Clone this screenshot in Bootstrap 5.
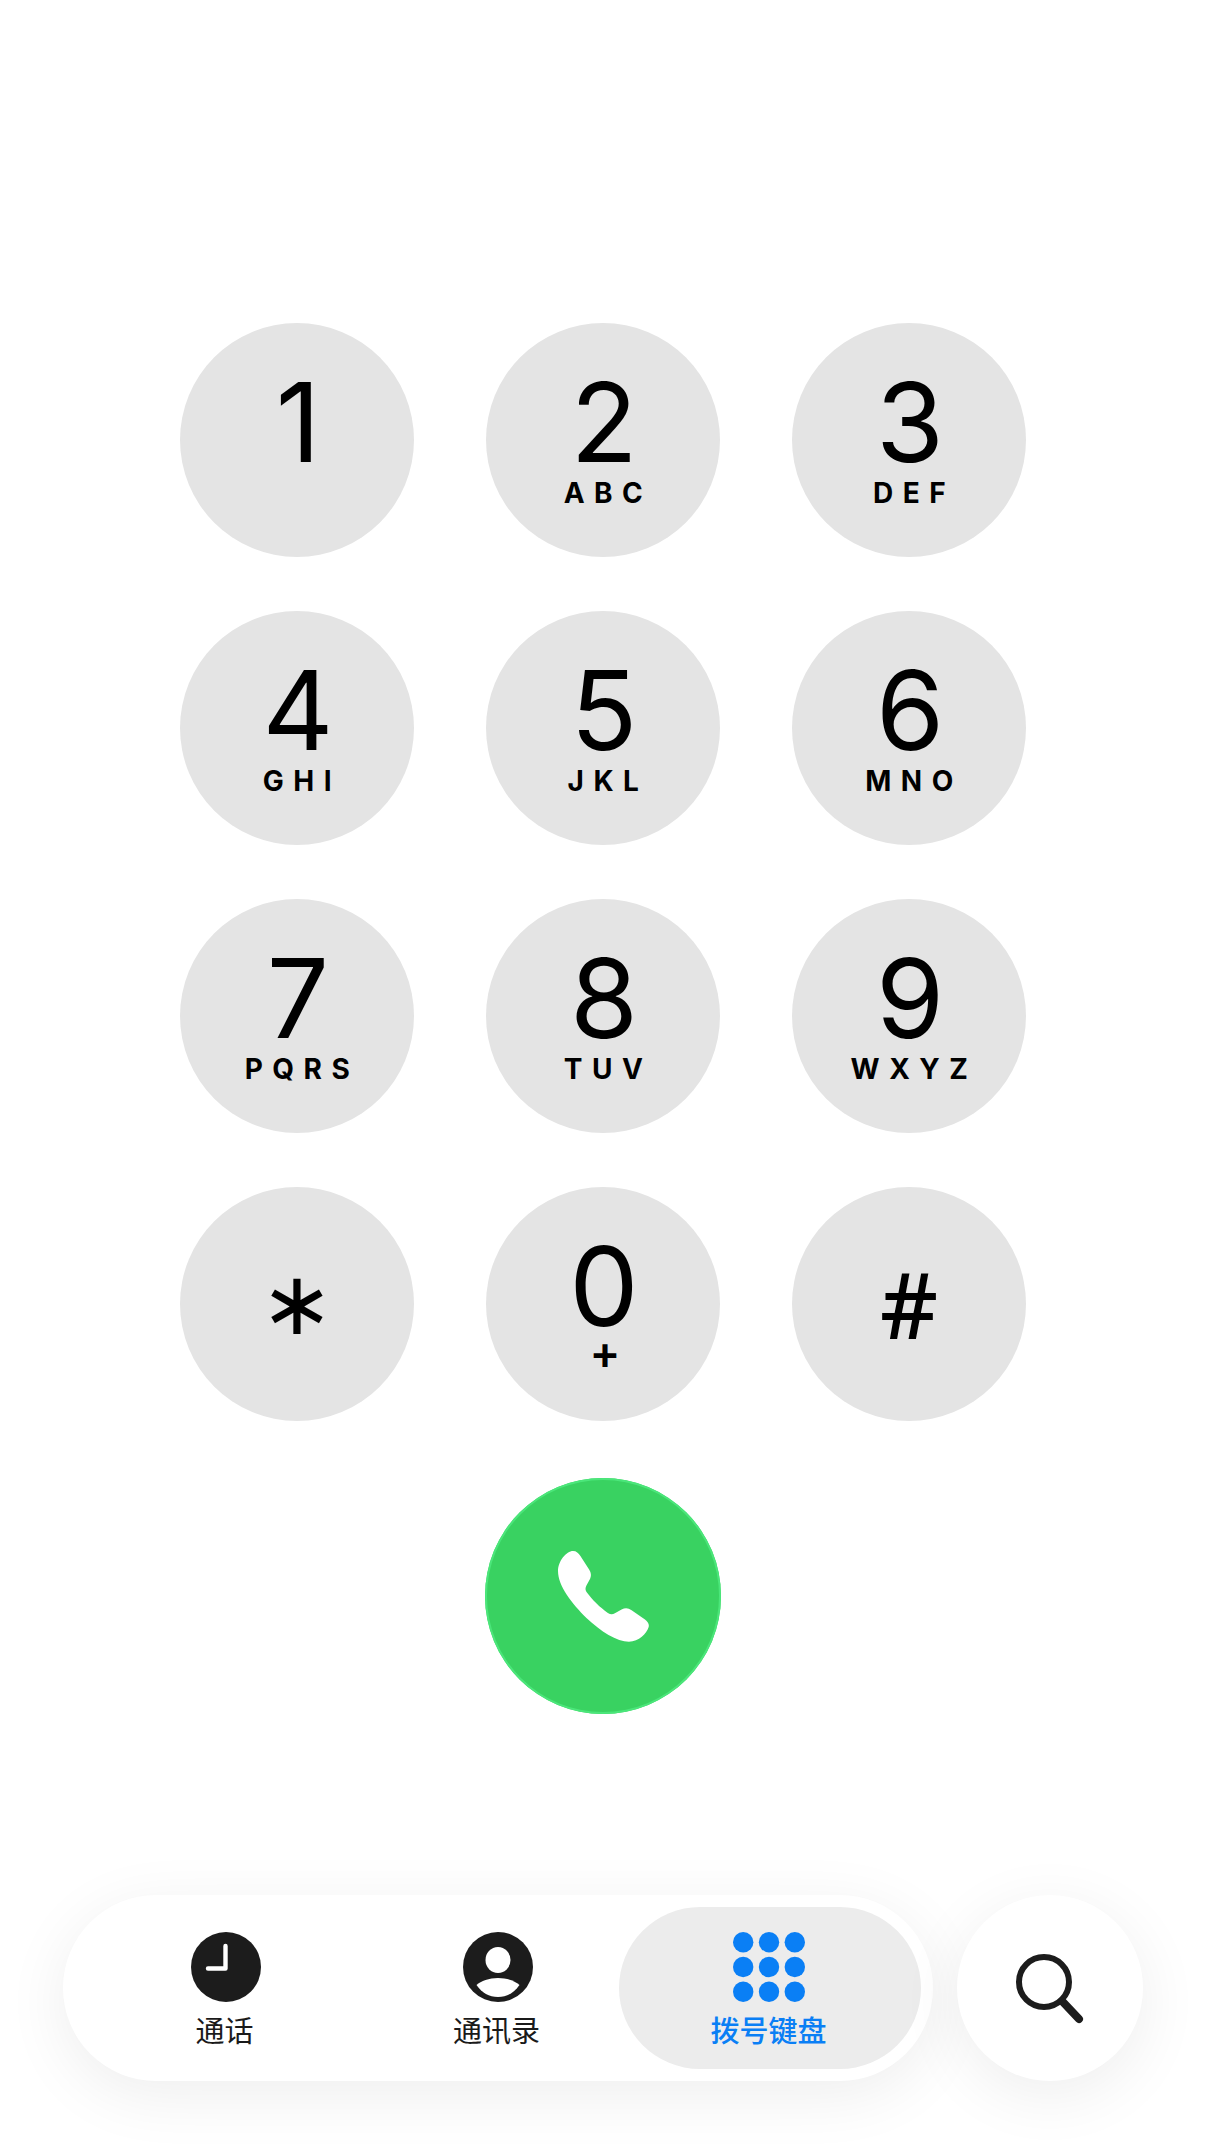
<!DOCTYPE html>
<html lang="zh-CN">
<head>
    <meta charset="UTF-8">
    <meta name="viewport" content="width=device-width, initial-scale=1.0">
    <title>拨号键盘</title>
    <link href="https://cdn.jsdelivr.net/npm/bootstrap@5.3.0/dist/css/bootstrap.min.css" rel="stylesheet">
    <style>
        body {
            background-color: #fff;
            font-family: Inter, "Noto Sans CJK SC", sans-serif;
        }
        .dial-screen {
            min-height: 2144px;
            padding-top: 323px;
        }
        .dial-pad {
            display: grid;
            grid-template-columns: repeat(3, 234px);
            column-gap: 72px;
            row-gap: 54px;
            width: 846px;
            margin: 0 auto;
        }
        .dial-key {
            width: 234px;
            height: 234px;
            padding: 44px 0 0;
            border: 0;
            background: #e4e4e4;
            color: #000;
            line-height: 1;
        }
        .dial-key:hover, .dial-key:active {
            background: #e4e4e4 !important;
            color: #000 !important;
        }
        .key-digit {
            display: block;
            height: 110px;
            padding-left: 2px;
            font-size: 110px;
            font-weight: 400;
            line-height: 1;
        }
        .key-letters {
            display: block;
            height: 28px;
            margin-top: 2px;
            font-size: 28px;
            font-weight: 700;
            line-height: 1;
            letter-spacing: 9.5px;
            padding-left: 10px;
        }
        .key-plus {
            font-size: 46px;
            font-weight: 600;
            letter-spacing: 0;
            padding-left: 4px;
            margin-top: -12px;
        }
        .key-symbol {
            padding: 0;
        }
        .key-star {
            height: auto;
            padding-left: 0;
            font-family: "DejaVu Sans", sans-serif;
            font-size: 88px;
        }
        .key-hash {
            height: auto;
            padding-left: 0;
            font-family: "Noto Sans", sans-serif;
            font-size: 90px;
            font-weight: 500;
        }
        .call-key {
            width: 236px;
            height: 236px;
            margin: 57px auto 0;
            border: 0;
            padding: 0;
            background: #39d261;
            box-shadow: inset 0 0 0 2px #4be67a;
        }
        .call-key:hover, .call-key:active {
            background: #39d261 !important;
        }
        .tab-row {
            margin-top: 181px;
            padding-left: 63px;
            gap: 24px;
        }
        .tab-pill {
            width: 870px;
            height: 186px;
            padding: 12px;
            background: #fff;
            border-radius: 93px;
            box-shadow: 0 14px 64px rgba(0, 0, 0, .07);
        }
        .tab-item {
            height: 162px;
            padding-top: 25px;
            font-family: "Noto Sans CJK SC", sans-serif;
            font-size: 29px;
            line-height: 34px;
            color: #1a1a1a;
        }
        .tab-item span {
            margin-right: 3px;
        }
        .tab-wide {
            width: 302px;
        }
        .tab-mid {
            width: 242px;
        }
        .tab-active {
            background: #ececec;
            border-radius: 81px;
            color: #0a7ff5;
            font-weight: 500;
        }
        .tab-item svg {
            display: block;
            margin-bottom: 10px;
        }
        .tab-active svg {
            margin-right: 2px;
        }
        .search-round {
            width: 186px;
            height: 186px;
            background: #fff;
            box-shadow: 0 14px 64px rgba(0, 0, 0, .07);
        }
    </style>
</head>
<body>
    <div class="dial-screen">
        <div class="dial-pad" id="dialPad"></div>

        <button type="button" class="btn call-key rounded-circle d-flex align-items-center justify-content-center">
            <svg width="91" height="91" viewBox="293 305 272 272" fill="#fff">
                <path d="M338 305C348 305 354 311 360 320L386 360C392 370 393 378 389 388L378 408C374 416 374 422 380 430C395 450 418 474 442 490C450 495 456 495 463 491L483 480C494 474 503 475 513 482L553 510C562 517 566 524 564 532C558 552 535 576 505 576C470 576 420 545 378 505C335 463 293 410 293 365C293 335 318 305 338 305Z"/>
            </svg>
        </button>

        <div class="tab-row d-flex">
            <div class="tab-pill d-flex">
                <div class="tab-item tab-wide d-flex flex-column align-items-center">
                    <svg width="70" height="70" viewBox="0 0 70 70">
                        <circle cx="35" cy="35" r="35" fill="#1c1c1c"/>
                        <path d="M17 36.5H34.5V14" fill="none" stroke="#fff" stroke-width="4.4" stroke-linecap="round" stroke-linejoin="round"/>
                    </svg>
                    <span>通话</span>
                </div>
                <div class="tab-item tab-mid d-flex flex-column align-items-center">
                    <svg width="70" height="70" viewBox="0 0 70 70">
                        <circle cx="35" cy="35" r="35" fill="#1c1c1c"/>
                        <ellipse cx="35" cy="28" rx="12.5" ry="13" fill="#fff"/>
                        <path d="M13.5 53C18 49 26 46 35 46C44 46 52 49 56.5 53C51 61 44 65 35 65C26 65 19 61 13.5 53Z" fill="#fff"/>
                    </svg>
                    <span>通讯录</span>
                </div>
                <div class="tab-item tab-wide tab-active d-flex flex-column align-items-center">
                    <svg width="72" height="70" viewBox="0 0 72 70" fill="#0a7ff5">
                        <circle cx="10.2" cy="10.2" r="10.2"/><circle cx="36" cy="10.2" r="10.2"/><circle cx="61.8" cy="10.2" r="10.2"/>
                        <circle cx="10.2" cy="35" r="10.2"/><circle cx="36" cy="35" r="10.2"/><circle cx="61.8" cy="35" r="10.2"/>
                        <circle cx="10.2" cy="59.8" r="10.2"/><circle cx="36" cy="59.8" r="10.2"/><circle cx="61.8" cy="59.8" r="10.2"/>
                    </svg>
                    <span>拨号键盘</span>
                </div>
            </div>
            <div class="search-round rounded-circle d-flex align-items-center justify-content-center">
                <svg width="72" height="72" viewBox="0 0 72 72" fill="none" stroke="#1c1c1c">
                    <circle cx="30" cy="30" r="25" stroke-width="6"/>
                    <path d="M48 49L65 67" stroke-width="8" stroke-linecap="round"/>
                </svg>
            </div>
        </div>
    </div>

    <script>
        // Key data: digit and the letters below it
        const keys = [
            ['1', ''], ['2', 'ABC'], ['3', 'DEF'],
            ['4', 'GHI'], ['5', 'JKL'], ['6', 'MNO'],
            ['7', 'PQRS'], ['8', 'TUV'], ['9', 'WXYZ'],
            ['*', ''], ['0', '+'], ['#', '']
        ];
        const pad = document.getElementById('dialPad');

        keys.forEach(function(key) {
            const btn = document.createElement('button');
            btn.type = 'button';
            btn.className = 'btn dial-key rounded-circle d-flex flex-column align-items-center';
            if (key[0] === '*') {
                btn.classList.add('key-symbol', 'justify-content-center');
                btn.innerHTML = '<span class="key-digit key-star">∗</span>';
            } else if (key[0] === '#') {
                btn.classList.add('key-symbol', 'justify-content-center');
                btn.innerHTML = '<span class="key-digit key-hash">#</span>';
            } else {
                const cls = key[1] === '+' ? 'key-letters key-plus' : 'key-letters';
                btn.innerHTML = '<span class="key-digit">' + key[0] + '</span><span class="' + cls + '">' + key[1] + '</span>';
            }
            pad.appendChild(btn);
        });
    </script>
</body>
</html>
